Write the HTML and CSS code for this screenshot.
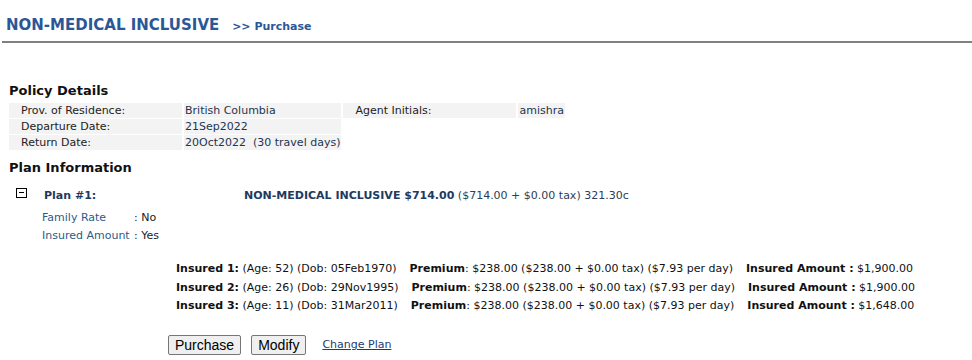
FILE: index.html
```html
<!DOCTYPE html>
<html lang="en">
<head>
<meta charset="utf-8">
<title>Non-Medical Inclusive - Purchase</title>
<link rel="stylesheet" href="styles.css">
</head>
<body>

<div class="page-head">
  <span class="title">NON-MEDICAL INCLUSIVE</span>
  <span class="crumb">&gt;&gt; Purchase</span>
</div>

<h2>Policy Details</h2>
<table class="details">
  <tr>
    <td class="lbl">Prov. of Residence:</td>
    <td class="val">British Columbia</td>
    <td class="lbl">Agent Initials:</td>
    <td class="val">amishra</td>
  </tr>
  <tr>
    <td class="lbl">Departure Date:</td>
    <td class="val">21Sep2022</td>
  </tr>
  <tr>
    <td class="lbl">Return Date:</td>
    <td class="val">20Oct2022&nbsp; (30 travel days)</td>
  </tr>
</table>

<h2>Plan Information</h2>
<div class="plan">
  <div class="plan-row">
    <span class="toggle"></span>
    <span class="plan-no">Plan #1:</span>
    <span class="plan-name"><b>NON-MEDICAL INCLUSIVE $714.00</b> ($714.00 + $0.00 tax) 321.30c</span>
  </div>
  <div class="opts">
    <div><span class="opt">Family Rate</span>: No</div>
    <div><span class="opt">Insured Amount</span>: Yes</div>
  </div>
  <div class="insured">
    <div><b>Insured 1:</b> (Age: 52) (Dob: 05Feb1970)<span class="sep"><b>Premium</b>: $238.00 ($238.00 + $0.00 tax) ($7.93 per day)</span><span class="sep"><b>Insured Amount :</b> $1,900.00</span></div>
    <div><b>Insured 2:</b> (Age: 26) (Dob: 29Nov1995)<span class="sep"><b>Premium</b>: $238.00 ($238.00 + $0.00 tax) ($7.93 per day)</span><span class="sep"><b>Insured Amount :</b> $1,900.00</span></div>
    <div><b>Insured 3:</b> (Age: 11) (Dob: 31Mar2011)<span class="sep"><b>Premium</b>: $238.00 ($238.00 + $0.00 tax) ($7.93 per day)</span><span class="sep"><b>Insured Amount :</b> $1,648.00</span></div>
  </div>
  <div class="actions">
    <button>Purchase</button>
    <button>Modify</button>
    <a href="#">Change Plan</a>
  </div>
</div>

</body>
</html>
```

FILE: styles.css
```css
*{box-sizing:border-box}
body{margin:0;font-family:"DejaVu Sans",Verdana,sans-serif;font-size:11px;color:#222;background:#fff}
.page-head{margin:0 0 0 2px;height:43px;padding:16px 0 0 4px;border-bottom:2px solid #808080;color:#2b5797;font-weight:bold}
.title{font-size:15px}
.crumb{font-size:11px;margin-left:9px}
h2{margin:40px 0 3px 9px;font-size:13px;line-height:16px;color:#111}
.details{margin-left:7px;border-spacing:2px 1px}
.details td{height:15px;padding:0 1px;background:#f3f3f3;line-height:15px;white-space:nowrap}
.details td.lbl{width:173px;padding-left:12px}
.details td.val{color:#1e3550}
.details tr:first-child td.val:nth-child(2){width:155px}
.details + h2{margin-top:9px}
.plan{padding-left:16px}
.plan-row{display:flex;align-items:center;height:20px;margin-top:9px}
.toggle{width:11px;height:10px;border:1px solid #000;position:relative;margin-top:-4px}
.toggle::after{content:"";position:absolute;left:2px;right:2px;top:3px;height:1px;background:#000}
.plan-no{width:200px;margin-left:17px;font-weight:bold;color:#1e3a5f}
.plan-name{color:#2c3e55}
.plan-name b{color:#1e3a5f}
.opts{margin:4px 0 0 26px;line-height:18px}
.opt{display:inline-block;width:92px;color:#2d5a8a}
.insured{margin:15px 0 0 160px;line-height:18.5px;color:#111}
.sep{margin-left:13px}
.actions{display:flex;align-items:center;margin:19px 0 0 152px;gap:10px}
.actions button{font-family:"Liberation Sans",Arial,sans-serif;font-size:14px;height:20px;padding:0 6px;border:1px solid #767676;border-radius:2px;background:#efefef;color:#000}
.actions a{margin-left:6px;color:#1e3a6f;font-size:11px}
```
